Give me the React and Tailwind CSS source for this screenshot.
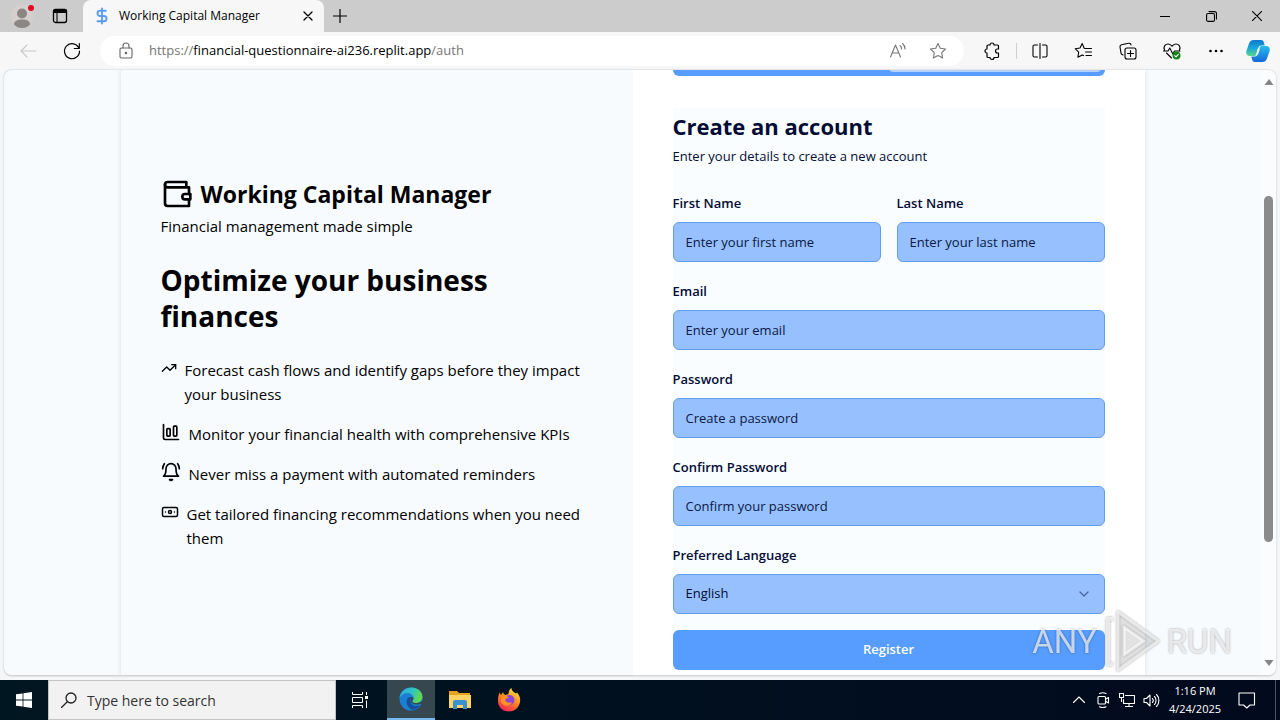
import React, { useState } from 'react';
import { Banknote, ChartColumnBig, ChevronDown, DollarSign, TrendingUp } from 'lucide-react';

const Icon = ({ size = 20, viewBox = '0 0 20 20', children, className = '' }) => (
  <svg
    width={size}
    height={size}
    viewBox={viewBox}
    fill="none"
    stroke="currentColor"
    strokeWidth="1.1"
    strokeLinecap="round"
    strokeLinejoin="round"
    className={`shrink-0 ${className}`}
    aria-hidden="true"
  >
    {children}
  </svg>
);

const BellRing = ({ className }) => (
  <svg viewBox="0 0 24 24" fill="none" stroke="currentColor" strokeWidth="2" strokeLinecap="round" strokeLinejoin="round" className={className} aria-hidden="true">
    <path d="M6 8a6 6 0 0 1 12 0c0 7 3 9 3 9H3s3-2 3-9" />
    <path d="M10.300 21a1.940 1.940 0 0 0 3.400 0Z" />
    <path d="M4 2C2.800 3.700 2 5.700 2 8" />
    <path d="M22 8c0-2.300-.8-4.300-2-6" />
  </svg>
);

const toolbarItems = [
  {
    label: 'Split screen',
    icon: (
      <Icon>
        <path d="M7.500 4H4.500A1.500 1.500 0 0 0 3 5.500v9A1.500 1.500 0 0 0 4.500 16H7.500M12.500 4h3A1.500 1.500 0 0 1 17 5.500v9a1.500 1.500 0 0 1-1.500 1.500h-3M10 2.500v15" />
      </Icon>
    )
  },
  {
    label: 'Favorites',
    icon: (
      <Icon>
        <path d="M11 7.500 10.200 7.300 8.200 2.500 6 7l-4.800.7 3.500 3.500-.8 5 4.300-2.300 1.300.7M11 7.500h6.500M11.500 11h6M12 14.500h5.500" />
      </Icon>
    )
  },
  {
    label: 'Collections',
    icon: (
      <Icon>
        <rect x="7" y="7" width="11" height="11" rx="2" />
        <path d="M12.500 9.500v6M9.500 12.500h6M5 14l-.8-.4a2 2 0 0 1-1.200-1.500L2 6a2 2 0 0 1 1.500-2.200l7-1.500A2 2 0 0 1 13 4" />
      </Icon>
    )
  },
  {
    label: 'Browser essentials',
    icon: (
      <Icon>
        <path d="M2.500 9C1 5.500 3.500 3 6 3c2 0 3.300 1.200 4 2.300C10.700 4.200 12 3 14 3c2.500 0 5 2.500 3.500 6M4.500 12l5 5M1.500 10H6l1.800-3 3 6 1.700-3H18" />
        <circle cx="14.500" cy="14.500" r="4" fill="#13851b" stroke="none" />
        <path d="m12.800 14.600 1.200 1.200 2.300-2.400" stroke="#fff" />
      </Icon>
    )
  },
  {
    label: 'Settings and more',
    icon: (
      <Icon>
        <g fill="currentColor" stroke="none">
          <circle cx="4.500" cy="10" r="1.300" />
          <circle cx="10" cy="10" r="1.300" />
          <circle cx="15.500" cy="10" r="1.300" />
        </g>
      </Icon>
    )
  }
];

const TitleBar = () => (
  <div className="flex h-8 shrink-0 bg-[#cccccc]">
    <div className="flex w-[83px] items-center">
      <button aria-label="Profile" className="ml-2 flex w-7 justify-center">
        <svg width="28" height="28" viewBox="0 0 28 28" aria-hidden="true">
          <circle cx="14" cy="14" r="11" fill="#d5d0ce" />
          <circle cx="14" cy="11.500" r="5" fill="#8b8683" />
          <path d="M6 22.500c0-3.500 3-5 8-5s8 1.500 8 5c-2 2.500-5 3.500-8 3.500s-6-1-8-3.500Z" fill="#8b8683" />
          <circle cx="23" cy="6" r="3" fill="#e00b1c" />
        </svg>
      </button>
      <button aria-label="Tab actions" className="ml-4">
        <Icon size={16} viewBox="0 0 16 16">
          <rect x="1.500" y="1.500" width="13" height="13" rx="2" strokeWidth="1.300" />
          <path d="M1.500 4.500V3a1.500 1.500 0 0 1 1.500-1.500h10A1.500 1.500 0 0 1 14.500 3v1.500Z" fill="currentColor" />
          <path d="M5 5v9" />
        </Icon>
      </button>
    </div>
    <div className="flex w-[241px] items-center rounded-t-lg bg-[#f7f7f7] pr-2 pl-[10px]">
      <DollarSign size={18} strokeWidth={2.500} className="mr-2 text-[#5b9bf5]" />
      <span className="flex-1 text-[12px]">Working Capital Manager</span>
      <button aria-label="Close tab" className="flex h-4 w-4 items-center justify-center">
        <Icon size={10} viewBox="0 0 10 10">
          <path d="m1 1 8 8M9 1 1 9" strokeWidth="1.300" />
        </Icon>
      </button>
    </div>
    <button aria-label="New tab" className="ml-[6px] flex w-5 items-center justify-center">
      <Icon size={14} viewBox="0 0 14 14">
        <path d="M7 .5v13M.5 7h13" strokeWidth="1.200" />
      </Icon>
    </button>
    <div className="ml-auto flex">
      <button aria-label="Minimize" className="flex w-[46px] items-center justify-center">
        <Icon size={10} viewBox="0 0 10 10"><path d="M0 5.500h10" /></Icon>
      </button>
      <button aria-label="Restore" className="flex w-[46px] items-center justify-center">
        <Icon size={11} viewBox="0 0 11 11">
          <rect x=".6" y="2.500" width="7.900" height="7.900" rx="1.500" />
          <path d="M3 .6h5.500a2 2 0 0 1 2 2V8" />
        </Icon>
      </button>
      <button aria-label="Close" className="flex w-[46px] items-center justify-center">
        <Icon size={10} viewBox="0 0 10 10"><path d="m0 0 10 10M10 0 0 10" /></Icon>
      </button>
    </div>
  </div>
);

const Toolbar = () => (
  <div className="flex h-[38px] shrink-0 items-center bg-[#f7f7f7] pr-[10px] pl-[18px]">
    <button aria-label="Back" className="text-[#c8c8c8]">
      <Icon><path d="M18 10H3M9 4l-6 6 6 6" /></Icon>
    </button>
    <button aria-label="Refresh" className="ml-6">
      <Icon>
        <path d="M17 7.500A7.500 7.500 0 1 0 17.500 10M17.300 2.500v5h-5" strokeWidth="1.200" />
      </Icon>
    </button>
    <div className="ml-[18px] flex h-[30px] flex-1 items-center rounded-full bg-white pr-4 pl-4">
      <Icon className="text-[#666666]">
        <rect x="4" y="7" width="12" height="10" rx="1.500" />
        <path d="M7 7V5a3 3 0 0 1 6 0v2" />
        <circle cx="10" cy="12" r=".7" fill="currentColor" />
      </Icon>
      <span className="ml-[13px] flex-1 text-[13px] text-[#767676]">
        https://<span className="text-black">financial-questionnaire-ai236.replit.app</span>/auth
      </span>
      <button aria-label="Read aloud" className="text-[#777777]">
        <Icon>
          <path d="m2.500 16 5-12 5 12M4.200 12h6.600M12 4.500a4 4 0 0 1 1.500 3.500M14.500 2.500A7 7 0 0 1 17 8" />
        </Icon>
      </button>
      <button aria-label="Add to favorites" className="ml-5 text-[#777777]">
        <Icon>
          <path d="m10 2.500 2.300 4.800 5.200.7-3.800 3.700.9 5.300-4.600-2.500L5.400 17l.9-5.300L2.500 8l5.200-.7Z" />
        </Icon>
      </button>
    </div>
    <button aria-label="Extensions" className="ml-[18px]">
      <Icon>
        <path d="M6 4h2a2 2 0 0 1 4 0h3.500a1 1 0 0 1 1 1v3h-1a2 2 0 0 0 0 4h1v3.500a1 1 0 0 1-1 1H12a2 2 0 0 1-4 0H6a1 1 0 0 1-1-1V12a2 2 0 0 1 0-4V5a1 1 0 0 1 1-1Z" strokeWidth="1.200" />
      </Icon>
    </button>
    <div className="ml-[14px] h-4 w-px bg-[#d0d0d0]" />
    <div className="ml-[13px] flex gap-6">
      {toolbarItems.map(item => (
        <button key={item.label} aria-label={item.label}>{item.icon}</button>
      ))}
    </div>
    <button aria-label="Copilot" className="ml-5">
      <svg width="24" height="24" viewBox="0 0 24 24" aria-hidden="true">
        <defs>
          <linearGradient id="copilotLeft" x1="0" y1="0" x2="0" y2="1">
            <stop offset="0" stopColor="#0d78cf" />
            <stop offset=".5" stopColor="#18a7d8" />
            <stop offset="1" stopColor="#5ad68b" />
          </linearGradient>
          <linearGradient id="copilotRight" x1="0" y1="0" x2="0" y2="1">
            <stop offset="0" stopColor="#27bdf0" />
            <stop offset="1" stopColor="#1269d8" />
          </linearGradient>
        </defs>
        <path d="M8 1h7c2 0 2.500 1 3 3l.7 2.500h-3C13 6.500 12.500 8 12 10l-1.500 5c-.5 1.500-1 2-3 2H3.500C1 17-.3 15 .4 12L3 4.500C3.800 2 5.500 1 8 1Z" fill="url(#copilotLeft)" />
        <path d="M16 23H9c-2 0-2.500-1-3-3l-.7-2.500h3c2.700 0 3.200-1.500 3.700-3.500l1.500-5c.5-1.500 1-2 3-2h4c2.500 0 3.800 2 3.100 5L21 19.500c-.8 2.500-2.500 3.500-5 3.500Z" fill="url(#copilotRight)" />
        <path d="M11.800 9.500h2l-1.700 6h-2Z" fill="#f7f7f7" />
      </svg>
    </button>
  </div>
);

const features = [
  { icon: TrendingUp, width: 'w-4', text: 'Forecast cash flows and identify gaps before they impact your business' },
  { icon: ChartColumnBig, width: 'w-5', text: 'Monitor your financial health with comprehensive KPIs' },
  { icon: BellRing, width: 'w-5', text: 'Never miss a payment with automated reminders' },
  { icon: Banknote, width: 'w-[18px]', text: 'Get tailored financing recommendations when you need them' }
];

const Intro = () => (
  <section className="flex-1 bg-[#f8fbfe] px-10 pt-[107px] text-black">
    <div className="flex items-center gap-2">
      <svg width="32" height="32" viewBox="0 0 24 24" fill="none" stroke="currentColor" strokeWidth="2" strokeLinecap="round" strokeLinejoin="round" aria-hidden="true">
        <path d="M21 12V7H5a2 2 0 0 1 0-4h14v4" />
        <path d="M3 5v14a2 2 0 0 0 2 2h16v-5" />
        <path d="M18 12a2 2 0 0 0 0 4h4v-4Z" />
      </svg>
      <h1 className="pt-px text-[23px] leading-8 font-bold">Working Capital Manager</h1>
    </div>
    <p className="mt-1 text-[15px] leading-6">Financial management made simple</p>
    <h2 className="mt-6 text-[28px] leading-9 font-bold">Optimize your business finances</h2>
    <ul className="mt-6 space-y-4">
      {features.map(({ icon: FeatureIcon, width, text }) => (
        <li key={text} className="flex items-start gap-2">
          <FeatureIcon className={`h-5 shrink-0 ${width}`} />
          <span className="text-[15px] leading-6">{text}</span>
        </li>
      ))}
    </ul>
  </section>
);

const Field = ({ id, label, type = 'text', placeholder }) => (
  <div className="min-w-0 flex-1">
    <label htmlFor={id} className="block text-[13px] leading-[26px] font-semibold">{label}</label>
    <input
      id={id}
      type={type}
      placeholder={placeholder}
      className="mt-[6px] h-10 w-full rounded-md border border-[#619cf0] bg-[#97c0ff] px-3 text-[13px] placeholder:text-[#0a1845]"
    />
  </div>
);

const RegisterForm = () => {
  const [language, setLanguage] = useState('English');

  return (
    <section className="flex-1 bg-white px-10">
      <div className="-mt-[34px] flex h-10 rounded-md bg-[#579cff] p-1">
        <button aria-label="Login tab" className="flex-1 rounded-sm" />
        <button aria-label="Register tab" className="flex-1 rounded-sm bg-[#b5d2ff]" />
      </div>
      <form className="mt-8 bg-[#fafdff] pt-[6px] text-[#020c35]" onSubmit={e => e.preventDefault()}>
        <h3 className="text-[22px] leading-6 font-bold">Create an account</h3>
        <p className="mt-2 text-[13px] leading-5">Enter your details to create a new account</p>
        <div className="mt-6 space-y-4">
          <div className="flex gap-4">
            <Field id="firstName" label="First Name" placeholder="Enter your first name" />
            <Field id="lastName" label="Last Name" placeholder="Enter your last name" />
          </div>
          <Field id="email" label="Email" type="email" placeholder="Enter your email" />
          <Field id="password" label="Password" type="password" placeholder="Create a password" />
          <Field id="confirm" label="Confirm Password" type="password" placeholder="Confirm your password" />
          <div>
            <label htmlFor="language" className="block text-[13px] leading-[26px] font-semibold">Preferred Language</label>
            <div className="relative mt-[6px]">
              <select
                id="language"
                value={language}
                onChange={e => setLanguage(e.target.value)}
                className="h-10 w-full appearance-none rounded-md border border-[#619cf0] bg-[#97c0ff] px-3 text-[13px]"
              >
                <option>English</option>
              </select>
              <ChevronDown size={16} className="pointer-events-none absolute top-3 right-[13px] text-[#4a6799]" />
            </div>
          </div>
          <button type="submit" className="h-10 w-full rounded-md bg-[#579cff] text-[13px] font-semibold text-white">
            Register
          </button>
        </div>
      </form>
    </section>
  );
};

const Scrollbar = () => (
  <div className="flex w-[15px] shrink-0 flex-col items-center bg-[#fbfcfe] py-[9px]">
    <svg width="10" height="6" viewBox="0 0 10 6" fill="#858585" aria-hidden="true"><path d="M5 0 9.500 6H.5Z" /></svg>
    <div className="flex w-full flex-1 flex-col items-center py-1">
      <div className="grow-[107]" />
      <div className="w-[9px] grow-[346] rounded-full bg-[#8b8b8b]" />
      <div className="grow-[114]" />
    </div>
    <svg width="10" height="6" viewBox="0 0 10 6" fill="#858585" aria-hidden="true"><path d="M5 6 .5 0h9Z" /></svg>
  </div>
);

const Watermark = () => (
  <div className="pointer-events-none absolute right-12 bottom-[46px] flex items-center gap-1 font-['Roboto',sans-serif] text-[33px] leading-none text-white/70 drop-shadow-[0_0_1px_rgba(0,0,0,0.5)]">
    <span>ANY</span>
    <svg width="62" height="66" viewBox="0 0 62 66" fill="none" stroke="currentColor" strokeWidth="3" strokeLinejoin="round" aria-hidden="true">
      <path d="M17 4v58l40-29Z" fill="#999999" fillOpacity=".15" />
      <path d="M23 19v28l20-14Z" fill="currentColor" />
      <path d="M12 11H7v45h5" strokeWidth="4" />
    </svg>
    <span>RUN</span>
  </div>
);

const Taskbar = () => (
  <div className="flex h-10 shrink-0 bg-linear-to-r from-[#001620] to-[#020a1e] text-white">
    <button aria-label="Start" className="flex w-12 items-center justify-center">
      <svg width="16" height="16" viewBox="0 0 16 16" fill="currentColor" aria-hidden="true">
        <path d="M0 2.300 6.600 1.400v6.200H0ZM7.400 1.300 16 0v7.600H7.400ZM0 8.400h6.600v6.200L0 13.700ZM7.400 8.400H16V16l-8.600-1.200Z" />
      </svg>
    </button>
    <label className="flex w-[288px] items-center border border-[#c2c2c2] bg-[#f2f2f2] pl-3 text-[#222222]">
      <Icon size={16} viewBox="0 0 16 16">
        <circle cx="10" cy="6" r="5" strokeWidth="1.300" />
        <path d="M6.300 9.700.5 15.500" strokeWidth="1.300" />
      </Icon>
      <input aria-label="Search" placeholder="Type here to search" className="ml-[10px] min-w-0 flex-1 text-[14px] placeholder:text-[#333333]" />
    </label>
    <button aria-label="Task view" className="flex w-[51px] items-center justify-center pr-1">
      <svg width="18" height="16" viewBox="0 0 18 16" fill="none" stroke="currentColor" aria-hidden="true">
        <path d="M1.500 0v2.500h10V0M1.500 5.500h10v5h-10ZM1.500 16v-2.500h10V16M15.500 0v3M15.500 8.500V16" />
        <path d="M14 4h3v3h-3Z" fill="currentColor" stroke="none" />
      </svg>
    </button>
    <button aria-label="Microsoft Edge" className="flex w-12 items-center justify-center border-b-2 border-[#76b9ed] bg-[#36474f]">
      <svg width="24" height="24" viewBox="0 0 24 24" aria-hidden="true">
        <defs>
          <linearGradient id="edgeTop" x1="0" y1="0" x2="1" y2=".3">
            <stop offset="0" stopColor="#2aa7e8" />
            <stop offset=".6" stopColor="#30c6c0" />
            <stop offset="1" stopColor="#62d850" />
          </linearGradient>
        </defs>
        <circle cx="12" cy="12" r="11.500" fill="#1b80d3" />
        <path d="M.5 11C1.500 4.500 6.500.5 12.500.5c6.500 0 11 4.500 11 9 0 4-3 6.500-6.500 6.500-2.500 0-3.800-1-3.800-1.800 0-.7 1.300-1.200 1.300-3.200C14.500 8.500 12 6 8.500 6S2 8 .5 11Z" fill="url(#edgeTop)" />
        <path d="M9.500 10.500c-4 3-1.500 11 4.500 12.500 3-.5 6-2.500 7.500-5-5 2.500-10 .5-10-4.500 0-1.300.5-2.300 1.500-3-1-.7-2.500-.7-3.500 0Z" fill="#174e9b" />
        <path d="M13 10c-2 1.500-2 4.500 0 6 2.500 2 6 2 8.800.8l1.700 1.200-.5-4c-1.500 1.500-3.800 2-6 2-2.500 0-3.800-1-3.800-1.800 0-.7 1.300-1.200 1.300-3.200 0-.5-.5-1-1.500-1Z" fill="#36474f" />
      </svg>
    </button>
    <button aria-label="File Explorer" className="flex w-[50px] items-center justify-center">
      <svg width="22" height="20" viewBox="0 0 22 20" aria-hidden="true">
        <path d="M0 1h8l2 2h11v15H0Z" fill="#e8a41c" />
        <path d="M0 5h22v13H0Z" fill="#ffd465" />
        <path d="M4 19v-7a2 2 0 0 1 2-2h10a2 2 0 0 1 2 2v7h-4v-4H8v4Z" fill="#3c91d2" />
      </svg>
    </button>
    <button aria-label="Firefox" className="flex w-12 items-center justify-center">
      <svg width="24" height="24" viewBox="0 0 24 24" aria-hidden="true">
        <defs>
          <linearGradient id="foxBody" x1=".8" y1="0" x2=".3" y2="1">
            <stop offset="0" stopColor="#ffe545" />
            <stop offset=".5" stopColor="#ff8a20" />
            <stop offset="1" stopColor="#f5205d" />
          </linearGradient>
        </defs>
        <path d="M3 4c0 1.500.5 2.500 1 3l2-3c.3 1.500 1 2.500 2.500 3l3-1c0-2.500 1-5 3-6 0 3 2.500 4 4.500 5.500l1-1c3 3 4 7 2.500 11.500C21 20.500 17 23.500 12 23.500 5.500 23.500 1 19 1 13c0-4 .5-6.500 2-9Z" fill="url(#foxBody)" />
        <circle cx="12.500" cy="12" r="5" fill="#8c45d8" />
        <path d="M5 9c2-1.500 5-1.500 7 .5-2 .3-2.500 1.500-4 2 .5 3 4 4 7 2.500-1.500 4-7 5-10 1.500C3.500 13.500 3.500 11 5 9Z" fill="#ff9320" />
      </svg>
    </button>
    <div className="ml-auto flex items-center">
      <button aria-label="Show hidden icons" className="mr-2">
        <Icon size={16} viewBox="0 0 16 16"><path d="m2.500 10.500 5.500-5.500 5.500 5.500" /></Icon>
      </button>
      <button aria-label="Meet now" className="mr-2">
        <Icon size={16} viewBox="0 0 16 16">
          <rect x="3" y="4.500" width="7.500" height="7.500" rx="1" />
          <path d="m10.500 7.300 3-1.800v5.500l-3-1.800M4.500 1.500c2-1 4.500-1 6.500 0M4.500 14.800c2 1 4.500 1 6.500 0" />
        </Icon>
      </button>
      <button aria-label="Network" className="mr-2">
        <Icon size={16} viewBox="0 0 16 16">
          <path d="M6.500 3.500h9v8h-11v-4M10 11.500v3M6.500 14.500h7M.5 1.500h4v4h-4ZM2.500 5.500v4" />
        </Icon>
      </button>
      <button aria-label="Volume" className="mr-2">
        <Icon size={17} viewBox="0 0 17 16">
          <path d="M1 6v4h2.500L7 13.500v-11L3.500 6ZM9.500 6c.8 1 .8 3 0 4M11.500 4c2 2 2 6 0 8M13.500 2c3.200 3.200 3.200 8.800 0 12" />
        </Icon>
      </button>
      <div className="w-[54px] text-center text-[11px] leading-[18px] whitespace-nowrap">
        <div>1:16 PM</div>
        <div>4/24/2025</div>
      </div>
      <button aria-label="Notifications" className="mr-[19px] ml-4">
        <Icon size={18} viewBox="0 0 18 18"><path d="M1 2h15.500v12H12l-3.200 3-3.200-3H1Z" /></Icon>
      </button>
      <div className="mr-1 h-full w-px bg-[#4c5263]" />
    </div>
  </div>
);

const App = () => (
  <div className="relative flex h-screen flex-col overflow-hidden bg-[#f4f6f8] font-['Open_Sans','Noto_Sans',sans-serif] text-black">
    <TitleBar />
    <Toolbar />
    <main className="mx-1 mb-1 flex min-h-0 flex-1 overflow-hidden rounded-lg border-b border-[#d4d4d4] bg-[#f8fbfe] shadow-[0_0_2px_rgba(0,0,0,0.25)]">
      <div className="min-w-0 flex-1 overflow-hidden">
        <div className="mx-auto flex min-h-full max-w-[1024px] shadow-[0_0_5px_rgba(0,0,0,0.12)]">
          <Intro />
          <RegisterForm />
        </div>
      </div>
      <Scrollbar />
    </main>
    <Taskbar />
    <Watermark />
  </div>
);

export default App;
